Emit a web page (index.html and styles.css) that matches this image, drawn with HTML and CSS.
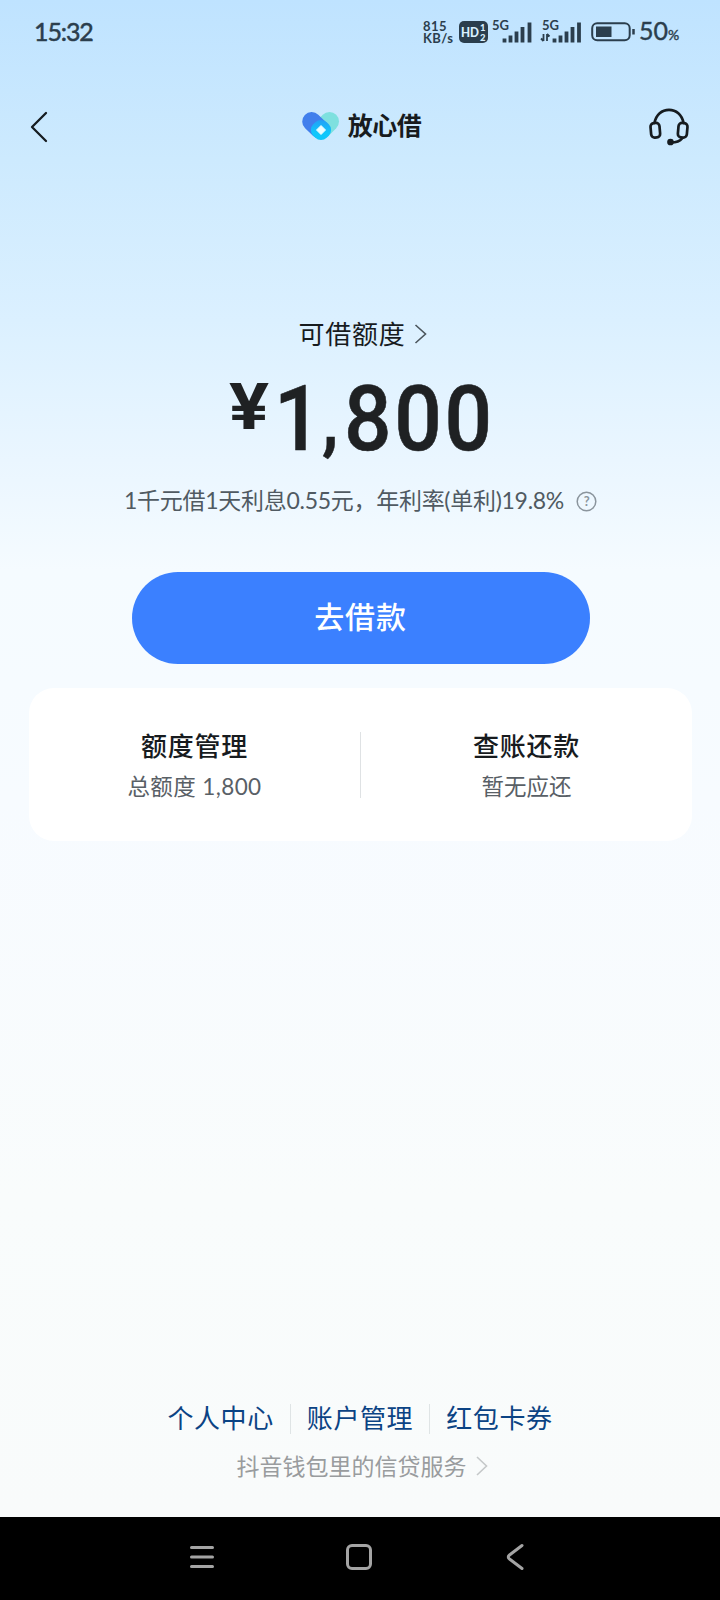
FILE: index.html
```html
<!DOCTYPE html>
<html lang="zh-CN">
<head>
<meta charset="utf-8">
<title>放心借</title>
<link rel="stylesheet" href="styles.css">
</head>
<body>
<div class="screen">
  <header class="status">
    <span class="time">15:32</span>
    <div class="indicators">
      <span class="speed"><span>815</span><span>KB/s</span></span>
      <svg class="hd" width="30" height="22" viewBox="0 0 30 22"><rect width="29" height="22" rx="5" fill="#2b3e4d"/><text x="2" y="16" font-size="13" textLength="18" lengthAdjust="spacingAndGlyphs">HD</text><text x="21" y="10" font-size="9.5">1</text><text x="21" y="19.5" font-size="9.5">2</text></svg>
      <svg class="signal" width="42" height="24" viewBox="0 0 42 24"><text x="0" y="10" font-size="13" textLength="17">5G</text><path d="M12.500 18.500v4M18.500 15.500v7M24.500 11.500v11M30.500 7v15.500M37.500 2.500v20"/></svg>
      <svg class="signal second" width="43" height="24" viewBox="0 0 43 24"><text x="2" y="10" font-size="13" textLength="17">5G</text><path d="M14.500 18.500v4M20.500 15.500v7M26.500 11.500v11M32.500 7v15.500M39 2.500v20"/><path class="data" d="M3.500 14v7M1 18.500l2.500 2.500M7 21v-7M7 14l2.500 2.500"/></svg>
      <svg class="battery" width="44" height="20" viewBox="0 0 44 20"><rect x="1.200" y="1.200" width="37.500" height="17" rx="5" fill="none" stroke="#2b3e4d" stroke-width="2"/><rect x="5" y="4.500" width="15.500" height="10.500" fill="#2b3e4d"/><path d="M42.500 7v5.500" stroke="#2b3e4d" stroke-width="2.500"/></svg>
      <span class="charge">50<small>%</small></span>
    </div>
  </header>

  <nav class="topbar">
    <svg class="back" width="20" height="34" viewBox="0 0 20 34"><path d="M17 3L3 17l14 14" fill="none" stroke="#161c20" stroke-width="2.300" stroke-linecap="round" stroke-linejoin="round"/></svg>
    <div class="brand">
      <svg width="38" height="30" viewBox="0 0 38 30">
        <defs>
          <linearGradient id="cyan" x1="0" y1="0" x2="1" y2="1"><stop stop-color="#2795f5"/><stop offset=".6" stop-color="#10c7fb"/></linearGradient>
        </defs>
        <path d="M27.500 9.500L20 17" stroke="#7ee0df" stroke-width="19" stroke-linecap="round"/>
        <path d="M9.700 9.500L17.500 17" stroke="#417fec" stroke-width="19" stroke-linecap="round"/>
        <rect x="9.500" y="8.500" width="19" height="19" rx="8" transform="rotate(45 19 18)" fill="url(#cyan)"/>
        <path d="M19 13.500l4.500 4.500-4.500 4.500-4.500-4.500z" fill="#e9fdff" stroke="#e9fdff" stroke-linejoin="round"/>
      </svg>
      <h1>放心借</h1>
    </div>
    <svg class="service" width="40" height="38" viewBox="0 0 40 38" fill="none" stroke="#161c20" stroke-width="2.700" stroke-linecap="round"><path d="M5.500 15C7 6.500 13 1.800 20 1.800S33 6.500 34.500 15"/><rect x="1.800" y="15" width="9" height="14.500" rx="3.500" transform="rotate(-5 6 22)"/><rect x="29.200" y="15" width="9" height="14.500" rx="3.500" transform="rotate(5 34 22)"/><path d="M33 30.500q-3 4-11 4"/><circle cx="21.500" cy="34" r="2" fill="#161c20"/></svg>
  </nav>

  <main>
    <div class="label"><span>可借额度</span><svg width="13" height="20" viewBox="0 0 13 20"><path d="M1.500 1l10 9-10 9" fill="none" stroke="#4b555c" stroke-width="1.600"/></svg></div>
    <div class="amount"><span class="yen">¥</span><span class="number"><span class="one">1</span><span class="comma">,</span><span>800</span></span></div>
    <div class="rate"><span>1千元借1天利息0.55元，年利率(单利)19.8%</span><svg width="21" height="21" viewBox="0 0 21 21"><circle cx="10.500" cy="10.500" r="9.300" fill="none" stroke="#8b959d" stroke-width="1.500"/><text x="10.500" y="15" text-anchor="middle">?</text></svg></div>
    <button class="borrow">去借款</button>
    <section class="card">
      <div class="item"><h2>额度管理</h2><p class="total">总额度 1,800</p></div>
      <div class="item"><h2>查账还款</h2><p>暂无应还</p></div>
    </section>
  </main>

  <footer class="footer">
    <div class="links"><a>个人中心</a><a>账户管理</a><a>红包卡券</a></div>
    <div class="provider"><span>抖音钱包里的信贷服务</span><svg width="12" height="20" viewBox="0 0 12 20"><path d="M1 1l9.500 9L1 19" fill="none" stroke="#c5c8c9" stroke-width="1.600"/></svg></div>
  </footer>

  <div class="system">
    <svg width="26" height="26" viewBox="0 0 26 26"><path d="M2.500 3.500h21M2.500 13h21M2.500 22.500h21"/></svg>
    <svg width="26" height="26" viewBox="0 0 26 26"><rect x="1.500" y="1.500" width="23" height="23" rx="4.500"/></svg>
    <svg width="26" height="26" viewBox="0 0 26 26"><path d="M19 1.500L6.500 11q-2.500 2 0 4L19 24.500"/></svg>
  </div>
</div>
</body>
</html>
```
FILE: styles.css
```css
* { box-sizing: border-box; margin: 0; padding: 0; }
body { font-family: Lato, "Noto Sans CJK SC", sans-serif; color: #171b1e; }
svg { display: block; flex: none; overflow: visible; }
.screen {
  width: 720px; height: 1600px; display: flex; flex-direction: column; overflow: hidden;
  background: linear-gradient(#bfe3ff 0, #cdeafe 160px, #dbf0ff 320px, #eaf6ff 460px, #f5fbff 570px, #f7fbff 800px, #f9fcfc 1200px, #f9fbfb 1517px);
}
.status { height: 64px; padding: 0 39px 0 34px; display: flex; justify-content: space-between; align-items: center; color: #2b3e4d; }
.time { font-size: 25px; letter-spacing: -1.1px; line-height: 60px; padding-bottom: 2px; -webkit-text-stroke: .5px #2b3e4d; }
.indicators { display: flex; align-items: center; height: 64px; }
.speed { display: flex; flex-direction: column; width: 36px; font-size: 13px; font-weight: 700; line-height: 12px; letter-spacing: .4px; white-space: nowrap; }
.hd text { font-weight: 900; fill: #d9efff; }
.signal { margin-left: 3px; margin-right: 1px; }
.signal.second { margin-left: 5px; margin-right: 0; }
.signal text { font-weight: 700; fill: #2b3e4d; }
.signal path { stroke: #2b3e4d; stroke-width: 3.8; }
.signal .data { stroke-width: 1.8; fill: none; }
.battery { margin-left: 8px; }
.charge { width: 42px; margin-left: 4px; font-size: 25px; line-height: 62px; white-space: nowrap; -webkit-text-stroke: .4px #2b3e4d; }
.charge small { font-size: 14px; }
.topbar { height: 126px; padding: 0 31px 0 29px; display: grid; grid-template-columns: 100px 1fr 100px; align-items: center; }
.service { justify-self: end; }
.brand { display: flex; justify-content: center; align-items: center; gap: 8px; padding-left: 5px; }
.brand h1 { font-size: 25px; font-weight: 700; line-height: 30px; letter-spacing: -.5px; padding-bottom: 4px; }
main { padding: 0 28px 0 29px; display: flex; flex-direction: column; align-items: center; }
.label { margin-top: 124px; height: 40px; display: flex; align-items: center; gap: 8px; padding-left: 4px; font-size: 26px; font-weight: 400; letter-spacing: .8px; }
.label span, .rate span, .provider span { padding-bottom: 3px; }
.amount { height: 100px; margin-top: 15px; width: 264px; display: flex; font: 500 91px/100px Roboto, sans-serif; color: #1f2123; }
.yen { width: 39px; font-size: 65px; font-weight: 700; line-height: 77px; transform: scaleX(1.15); transform-origin: 0 0; }
.number { display: flex; transform: scaleX(.92); transform-origin: 0 0; letter-spacing: 2.9px; padding-left: 12px; -webkit-text-stroke: .6px #1f2123; }
.one { width: 52px; }
.comma { width: 24px; font-size: 80px; line-height: 101px; }
.rate { margin-top: 12px; height: 40px; display: flex; align-items: center; gap: 12px; font-size: 23px; letter-spacing: -.28px; color: #505a62; white-space: nowrap; }
.rate span { padding-bottom: 5px; }
.rate text { font-size: 13px; font-weight: 700; fill: #8b959d; }
.borrow { margin-top: 51px; width: 458px; height: 92px; border: 0; border-radius: 46px; background: #3b80ff; color: #fff; font: 500 30px/88px Lato, "Noto Sans CJK SC", sans-serif; letter-spacing: .8px; padding-bottom: 4px; }
.card { margin-top: 24px; width: 663px; height: 153px; border-radius: 25px; background: #fff; display: flex; align-items: center; }
.item { flex: 1; text-align: center; height: 66px; }
.item + .item { border-left: 1px solid #dfe2e4; }
.item h2 { font-size: 26px; font-weight: 500; line-height: 28px; letter-spacing: .8px; }
.item p { margin-top: 12px; font-size: 22.500px; line-height: 30px; color: #596066; }
.item .total { letter-spacing: .4px; }
.footer { margin-top: auto; height: 127px; display: flex; flex-direction: column; align-items: center; padding-top: 14px; }
.links { display: flex; height: 30px; font-size: 26px; line-height: 28px; color: #0b4384; letter-spacing: .6px; }
.links a { padding: 0 16px; }
.links a + a { border-left: 1px solid #dfe4e5; }
.provider { margin-top: 17px; height: 30px; display: flex; align-items: center; gap: 9px; padding-left: 4px; font-size: 23px; color: #999c9e; }
.system { height: 83px; flex: none; padding: 0 191px 3px 189px; background: #000; display: flex; justify-content: space-between; align-items: center; }
.system svg { fill: none; stroke: #a4a4a4; stroke-width: 3; stroke-linecap: round; }
```
